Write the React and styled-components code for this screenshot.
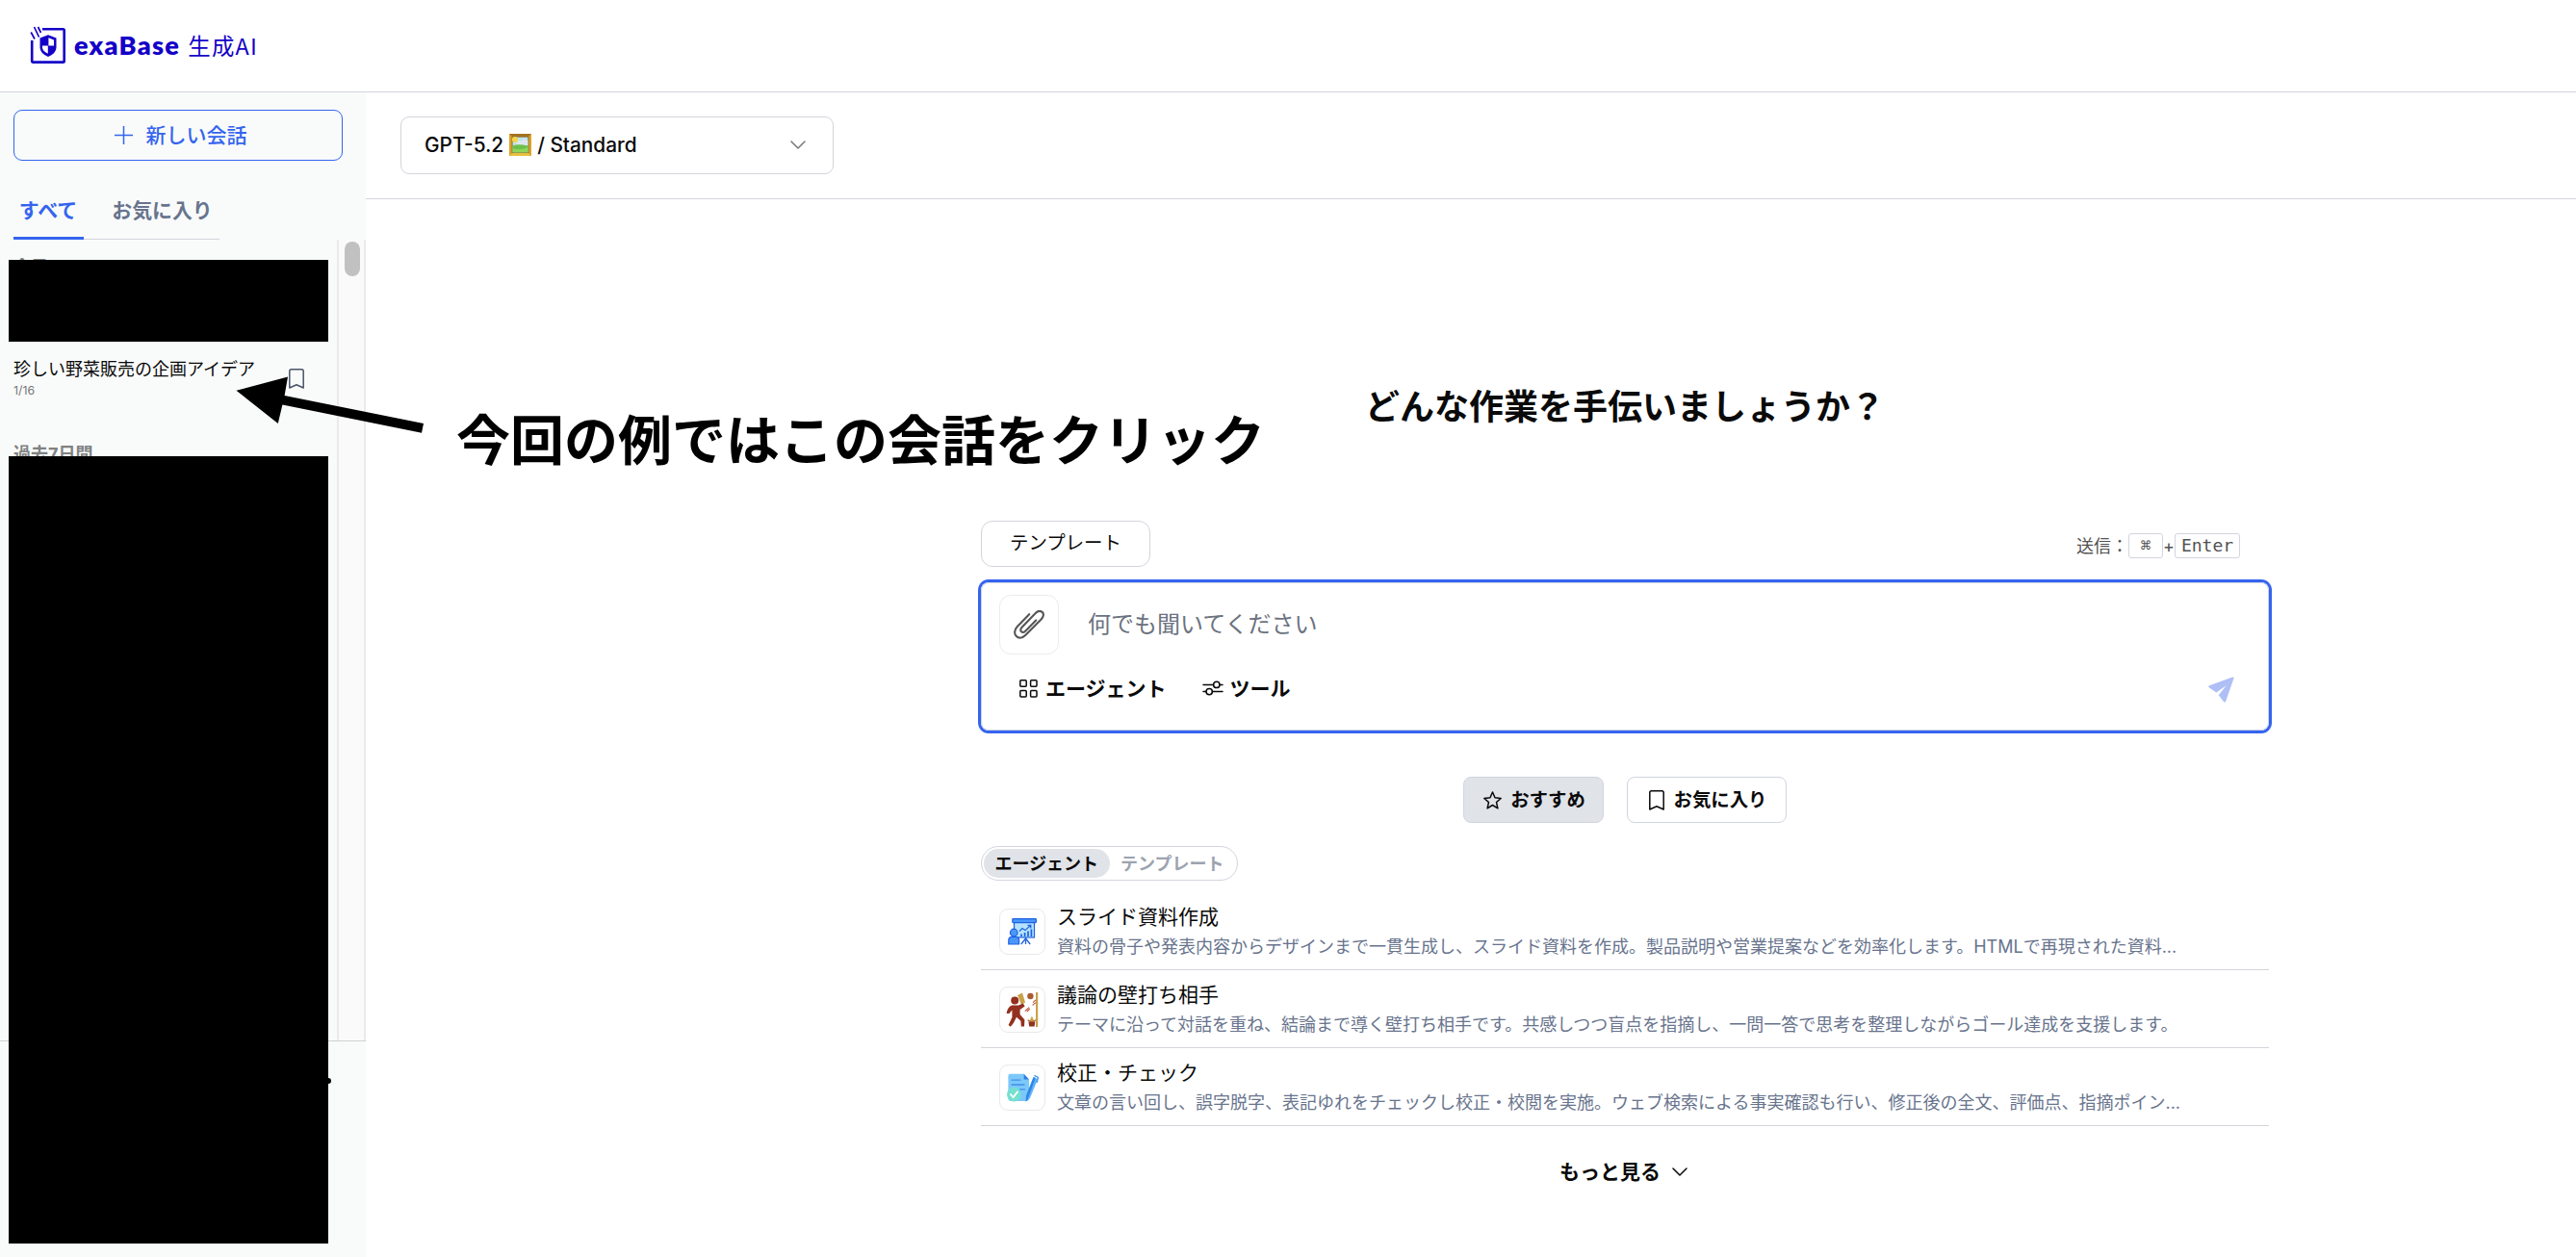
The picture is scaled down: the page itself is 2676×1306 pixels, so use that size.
import React from "react";
import styled, { createGlobalStyle } from "styled-components";

const BLUE = "#3464ef";
const LINE = "#d3d5dc";

const GlobalStyle = createGlobalStyle`
  *, *::before, *::after { box-sizing: border-box; }
  body {
    margin: 0;
    background: #fff;
    color: #0a0a0a;
    font-family: Inter, "Noto Sans CJK JP", sans-serif;
    -webkit-font-smoothing: antialiased;
  }
  button { font: inherit; color: inherit; background: none; border: 0; padding: 0; margin: 0; }
  svg { display: block; flex: none; }
`;

const Page = styled.div`
  position: relative;
  display: flex;
  flex-direction: column;
  width: 2676px;
  height: 1306px;
  overflow: hidden;
`;

const Header = styled.header`
  display: flex;
  align-items: center;
  height: 96px;
  padding: 0 31px 2px;
  border-bottom: 1px solid ${LINE};
`;

const Brand = styled.div`
  display: flex;
  align-items: center;
  color: #1400c8;
  height: 40px;
`;

const BrandName = styled.span`
  margin-left: 8px;
  font: 800 27px/36px Lato, sans-serif;
  letter-spacing: 1.3px;
`;

const BrandSub = styled.span`
  margin-left: 8px;
  font: 400 23.4px/36px "Noto Sans CJK JP", sans-serif;
  letter-spacing: 1.3px;
`;

const Body = styled.div`
  display: flex;
  flex: 1;
  min-height: 0;
`;

const Sidebar = styled.aside`
  display: flex;
  flex-direction: column;
  width: 380px;
  background: #f9fbfa;
`;

const NewChat = styled.button`
  display: flex;
  align-items: center;
  justify-content: center;
  gap: 14px;
  height: 53px;
  margin: 18px 24px 0 14px;
  padding: 0 0 0 5px;
  border: 1px solid ${BLUE};
  border-radius: 9px;
  color: ${BLUE};
  font-size: 21px;
  font-weight: 500;
`;

const NewChatLabel = styled.span`
  padding-bottom: 3px;
`;

const Tabs = styled.div`
  display: flex;
  align-self: flex-start;
  width: 214px;
  height: 49px;
  margin: 33px 0 0 14px;
  box-shadow: inset 0 -1px ${LINE};
`;

const Tab = styled.button`
  width: ${(p) => (p.$active ? 73 : 141)}px;
  padding: ${(p) => (p.$active ? "3px 1px 11px 0" : "0 0 12px 22px")};
  border-bottom: ${(p) => (p.$active ? `3px solid ${BLUE}` : "0")};
  color: ${(p) => (p.$active ? BLUE : "#68748d")};
  font-size: 20.9px;
  font-weight: 600;
  line-height: 30px;
  white-space: nowrap;
`;

const HistoryPane = styled.div`
  display: flex;
  height: 833px;
  border-bottom: 1px solid #cfd1d1;
`;

const HistoryList = styled.div`
  flex: 1;
  padding: 16px 34px 0 14px;
`;

const GroupLabel = styled.div`
  height: 26px;
  color: #808282;
  font-size: 18px;
  font-weight: 700;
  line-height: 26px;
`;

const Conversation = styled.div`
  display: flex;
  align-items: center;
  justify-content: space-between;
  height: 60px;
  margin: 72px 0 36px;
`;

const ConversationTitle = styled.div`
  font-size: 18px;
  line-height: 26px;
  white-space: nowrap;
`;

const ConversationDate = styled.div`
  color: #777;
  font-size: 12.3px;
  line-height: 18px;
`;

const ScrollTrack = styled.div`
  width: 30px;
  padding: 2px 0 0 6px;
  border: solid #e9eaea;
  border-width: 0 2px;
  background: #fafafa;
`;

const ScrollThumb = styled.div`
  width: 16px;
  height: 36px;
  border-radius: 8px;
  background: #c1c1c1;
`;

const Main = styled.main`
  display: flex;
  flex-direction: column;
  flex: 1;
`;

const Toolbar = styled.div`
  display: flex;
  height: 111px;
  padding: 25px 36px;
  border-bottom: 1px solid ${LINE};
`;

const ModelSelect = styled.div`
  display: flex;
  align-items: center;
  justify-content: space-between;
  width: 450px;
  height: 60px;
  padding: 0 28px 1px 24px;
  border: 1px solid ${LINE};
  border-radius: 9px;
`;

const ModelName = styled.div`
  display: flex;
  align-items: center;
  gap: 6px;
  font-size: 20.8px;
  font-weight: 500;
`;

const Column = styled.div`
  display: flex;
  flex-direction: column;
  width: 1338px;
  margin-left: 639px;
  padding-top: 190px;
`;

const Heading = styled.h1`
  margin: 0;
  text-align: center;
  font-size: 36px;
  font-weight: 700;
  line-height: 52px;
`;

const PromptBar = styled.div`
  display: flex;
  align-items: flex-start;
  justify-content: space-between;
  margin-top: 92px;
  padding-right: 30px;
  height: 64px;
`;

const TemplateButton = styled.button`
  width: 176px;
  height: 48px;
  padding-bottom: 5px;
  border: 1px solid ${LINE};
  border-radius: 12px;
  font-size: 19.4px;
  font-weight: 400;
`;

const Shortcut = styled.div`
  display: flex;
  align-items: center;
  height: 26px;
  margin-top: 13px;
  color: #525252;
  font-size: 18px;
`;

const ShortcutLabel = styled.span`
  padding-bottom: 2px;
`;

const Key = styled.kbd`
  display: flex;
  align-items: center;
  justify-content: center;
  width: ${(p) => p.$w}px;
  height: 26px;
  padding-bottom: 1px;
  border: 1px solid #d3d5df;
  border-radius: 3px;
  font: 18px/24px "DejaVu Sans Mono", monospace;
`;

const Plus = styled.span`
  width: 12px;
  text-align: center;
  font-size: 18px;
`;

const PromptBox = styled.div`
  display: flex;
  flex-direction: column;
  height: 154px;
  padding: 12px 18px;
  border: 1px solid #cdd2e4;
  border-radius: 8px;
  box-shadow: 0 0 0 3px ${BLUE};
`;

const PromptLine = styled.div`
  display: flex;
  align-items: center;
  gap: 30px;
`;

const Attach = styled.button`
  display: flex;
  align-items: center;
  justify-content: center;
  width: 62px;
  height: 62px;
  border: 1px solid #ececee;
  border-radius: 12px;
  color: #555;
`;

const Placeholder = styled.span`
  padding-bottom: 6px;
  color: #6b7280;
  font-size: 24px;
`;

const PromptActions = styled.div`
  display: flex;
  align-items: center;
  gap: 37px;
  height: 36px;
  margin-top: 17px;
  padding: 0 18px 0 21px;
`;

const Action = styled.button`
  display: flex;
  align-items: center;
  gap: ${(p) => p.$gap}px;
  font-size: 21px;
  font-weight: 600;
`;

const ActionLabel = styled.span`
  padding-bottom: 3px;
`;

const SendButton = styled.button`
  margin: 2px -1px 0 auto;
  color: #aebff6;
`;

const Filters = styled.div`
  display: flex;
  justify-content: center;
  gap: 24px;
  margin-top: 48px;
`;

const Filter = styled.button`
  display: flex;
  align-items: center;
  justify-content: center;
  gap: ${(p) => p.$gap}px;
  width: ${(p) => p.$w}px;
  height: 48px;
  padding-left: 2px;
  border: 1px solid #d1d5df;
  border-radius: 8px;
  background: ${(p) => (p.$active ? "#e0e3e8" : "#fff")};
  font-size: 19.4px;
  font-weight: 600;
`;

const Segmented = styled.div`
  display: flex;
  align-self: flex-start;
  height: 36px;
  width: 267px;
  margin-top: 24px;
  padding: 2px;
  border: 1px solid #d3d5df;
  border-radius: 18px;
`;

const Segment = styled.button`
  flex: 1;
  padding-bottom: 3px;
  border-radius: 15px;
  background: ${(p) => (p.$active ? "#e0e3e8" : "transparent")};
  color: ${(p) => (p.$active ? "#0a0a0a" : "#9ca3af")};
  font-size: 18px;
  font-weight: 600;
  white-space: nowrap;
`;

const AgentList = styled.div`
  margin-top: 12px;
`;

const AgentRow = styled.div`
  display: flex;
  align-items: center;
  gap: 12px;
  height: 81px;
  padding: 2px 0 0 19px;
  border-bottom: 1px solid ${LINE};
`;

const AgentIcon = styled.div`
  display: flex;
  align-items: center;
  justify-content: center;
  width: 48px;
  height: 48px;
  border: 1px solid #e9e9ec;
  border-radius: 9px;
`;

const AgentTitle = styled.div`
  padding-top: 1px;
  font-size: 21px;
  line-height: 30px;
  font-weight: 400;
`;

const AgentText = styled.div`
  color: #68748d;
  font-size: 18px;
  line-height: 31px;
  white-space: nowrap;
`;

const More = styled.button`
  display: flex;
  align-items: center;
  align-self: center;
  gap: 12px;
  height: 36px;
  margin: 29px 3px 0 0;
  font-size: 21px;
  font-weight: 600;
`;

const Redaction = styled.div`
  position: absolute;
  left: 9px;
  top: ${(p) => p.$top}px;
  width: 332px;
  height: ${(p) => p.$h}px;
  background: #000;
`;

const PeekDot = styled.div`
  position: absolute;
  left: 338px;
  top: 1120px;
  width: 6px;
  height: 6px;
  border-radius: 3px;
  background: #000;
`;

const Arrow = styled.svg`
  position: absolute;
  left: 240px;
  top: 385px;
`;

const Note = styled.div`
  position: absolute;
  left: 474px;
  top: 418px;
  color: #000;
  font-size: 56px;
  font-weight: 700;
  line-height: 80px;
  white-space: nowrap;
`;

const LogoMark = () => (
  <svg width="38" height="40" viewBox="0 0 38 40" fill="none" stroke="currentColor">
    <path d="M13 3.2H34.5Q35.7 3.2 35.7 4.4V36.4Q35.7 37.6 34.5 37.6H3.4Q2.2 37.6 2.2 36.4V15" strokeWidth="2.6" />
    <path d="M1.2 6.5L5 13.5M4.5 1L9.5 11.5M8.5 1L11.5 7" strokeWidth="1.7" />
    <path d="M19 9.2L27.5 12.6V22.4Q27.5 28 19 32Q10.5 28 10.5 22.4V12.6Z" fill="currentColor" stroke="none" />
    <path d="M19.4 12.2L25 14.5V20.6H19.4ZM13 20.6H18.8V28.8Q13 25.6 13 22.4Z" fill="#fff" stroke="none" />
  </svg>
);

const PlusIcon = () => (
  <svg width="19" height="19" viewBox="0 0 19 19" stroke="currentColor" strokeWidth="1.5">
    <path d="M9.5 0V19M0 9.5H19" />
  </svg>
);

const Bookmark = ({ color = "currentColor" }) => (
  <svg width="16" height="21" viewBox="0 0 16 21" fill="none" stroke={color} strokeWidth="1.5" strokeLinejoin="round">
    <path d="M.8 2.6Q.8.8 2.6.8H13.4Q15.2.8 15.2 2.6V20L8 16.8L.8 20Z" />
  </svg>
);

const Chevron = ({ color = "currentColor" }) => (
  <svg width="16" height="9" viewBox="0 0 16 9" fill="none" stroke={color} strokeWidth="1.5" strokeLinecap="round" strokeLinejoin="round">
    <path d="M1 1L8 8L15 1" />
  </svg>
);

const PictureFrame = () => (
  <svg width="23" height="23" viewBox="0 0 23 23">
    <rect width="23" height="23" rx=".6" fill="#d9a42c" />
    <path d="M0 0H23L20 3H3Z" fill="#a5741f" />
    <path d="M0 23H23L20 20H3Z" fill="#e9bf3f" />
    <rect x="2.6" y="2.6" width="17.8" height="17.4" fill="#8f6a25" />
    <rect x="3.6" y="3.6" width="15.8" height="15.6" fill="#bfe3ef" />
    <circle cx="6" cy="6" r="3" fill="#f4d649" />
    <path d="M8 9Q10 5.5 12.5 8Q15 4.5 19.4 7V12H8Z" fill="#dfe6ee" />
    <path d="M3.6 12.5Q9 10 19.4 12.5V19.2H3.6Z" fill="#6cc04a" />
    <path d="M3.6 15Q11 18 19.4 14V19.2H3.6Z" fill="#8fd65a" />
  </svg>
);

const Clip = () => (
  <svg width="32" height="30" viewBox="0 0 32 30" fill="none" stroke="currentColor" strokeWidth="2.1" strokeLinecap="round" strokeLinejoin="round">
    <path d="M16.2 4.2L4 16.8C.4 20.6.2 25 3.2 27.4C6 29.6 9.4 28.8 12.2 26L28.6 9.4C31.4 6.6 31.6 3.6 29.6 1.9C27.6.3 25 .8 22.8 3L8.8 17.6C7 19.4 6.8 21.2 8 22.3C9.2 23.4 11 22.8 12.4 21.4L23.2 10.4" />
  </svg>
);

const GridIcon = () => (
  <svg width="19" height="19" viewBox="0 0 19 19" fill="none" stroke="currentColor" strokeWidth="1.5">
    <rect x=".8" y=".8" width="6.4" height="6.4" rx="1" />
    <rect x="11.6" y=".8" width="6.4" height="6.4" rx="1" />
    <rect x=".8" y="11.6" width="6.4" height="6.4" rx="1" />
    <rect x="11.6" y="11.6" width="6.4" height="6.4" rx="1" />
  </svg>
);

const SlidersIcon = () => (
  <svg width="22" height="16" viewBox="0 0 22 16" fill="none" stroke="currentColor" strokeWidth="1.5" strokeLinecap="round">
    <circle cx="14.8" cy="4.4" r="3.2" />
    <circle cx="7.2" cy="11.6" r="3.2" />
    <path d="M1 4.4H11.6M18 4.4H21M1 11.6H4M10.4 11.6H21" />
  </svg>
);

const SendIcon = () => (
  <svg width="27" height="27" viewBox="0 0 27 27" fill="currentColor">
    <path d="M25.2.4Q27 .2 26.4 2L18.2 25.4Q17.2 27.6 15.8 25.8L10.8 19.2L18.6 9.2L8.4 16.4L1 11.4Q-.6 10 1.2 9.2Z" />
  </svg>
);

const StarIcon = () => (
  <svg width="19" height="19" viewBox="0 0 19 19" fill="none" stroke="currentColor" strokeWidth="1.5" strokeLinejoin="round">
    <path d="M9.5 1L12 6.8L18.2 7.4L13.5 11.5L14.9 17.8L9.5 14.5L4.1 17.8L5.5 11.5L.8 7.4L7 6.8Z" />
  </svg>
);

const SlideIcon = () => (
  <svg width="30" height="30" viewBox="0 0 30 30">
    <rect x="6.5" y="4" width="21" height="17" fill="#b5e2ff" stroke="#1e62e0" strokeWidth="1.2" />
    <rect x="4.8" y="1.6" width="24.6" height="4" rx=".8" fill="#4a97fb" stroke="#1e62e0" strokeWidth="1.2" />
    <path d="M12 14.5L15 11.6L18 13.6L23.5 8.5M20.5 8.3H23.8V11.6" fill="none" stroke="#1e62e0" strokeWidth="1.2" />
    <path d="M14 20V17.4M17.6 20V16M21 20V14.4M24.4 20V12.6" stroke="#1e62e0" strokeWidth="1.7" />
    <path d="M18.5 21V28M18.5 22L13.8 28M18.5 22L23.2 28" stroke="#1e62e0" strokeWidth="1.3" />
    <circle cx="6.2" cy="16" r="3.8" fill="#4a97fb" stroke="#1e62e0" strokeWidth="1.2" />
    <path d="M.8 28V24Q.8 20.4 4.4 20.4H8Q11.6 20.4 11.6 24V28Z" fill="#4a97fb" stroke="#1e62e0" strokeWidth="1.2" />
  </svg>
);

const WallHitIcon = () => (
  <svg width="34" height="38" viewBox="0 0 34 38">
    <rect x="31" y="1" width="2.2" height="36" fill="#c9a24a" />
    <circle cx="9.2" cy="9.4" r="4" fill="#93301f" />
    <path d="M12 4L17 1.6L20 11.5L16 14Z" fill="#c9a24a" />
    <path d="M6 14.5H13L17.8 12.6L19.6 15.4L14.6 19V24L19.4 29.6L19 36.4H15.8L15.4 30.8L11 26.8L7.8 33L4.8 36.8L2.6 35L6.4 27V19.4L3.4 23H.6Q1.4 16.6 6 14.5Z" fill="#93301f" />
    <circle cx="25.4" cy="5" r="3.2" fill="#a85c33" />
    <path d="M28 11.6L31 8.8M27.6 14.4L31 11.6M19.8 20.6L24 16.6M21.8 21L24.8 18" stroke="#c2523d" strokeWidth="1.1" />
    <path d="M23.4 31.4H30.4L29.6 36.6H24.2Z" fill="#93301f" />
    <path d="M26.9 25.5L29.6 31.4H24.2Z" fill="#c9a24a" />
    <path d="M22.6 29.6Q26.8 33.6 31 29.6" fill="none" stroke="#a85c33" strokeWidth="1.2" />
  </svg>
);

const ProofIcon = () => (
  <svg width="34" height="30" viewBox="0 0 34 30">
    <path d="M4.4 .8H18.6L24 6.4V26Q24 29 21 29H5Q2.4 29 2.4 26V2.8Q2.4.8 4.4.8Z" fill="#7cc8fa" />
    <path d="M18.6.8L24 6.4H18.6Z" fill="#2f7de0" />
    <path d="M6 7.2H15M6 12H19M14.6 16.8H19.6" stroke="#3f8fe8" strokeWidth="1.3" strokeLinecap="round" />
    <path d="M28.6 4L33 6.2L25 26L20.6 29.4L21 23.4Z" fill="#62b6f8" />
    <path d="M28.6 4L30.8 5.1L22.4 27.8L20.6 29.4L21 23.4Z" fill="#2f86e6" />
    <path d="M29.4 2.4L33.4 4.4L32 10" fill="none" stroke="#3f9af0" strokeWidth="1.4" />
    <circle cx="8.4" cy="22" r="7.4" fill="#74e0d0" />
    <path d="M4.8 22L7.6 25L12 19.4" fill="none" stroke="#fff" strokeWidth="1.8" strokeLinecap="round" />
  </svg>
);

const AGENTS = [
  {
    icon: <SlideIcon />,
    title: "スライド資料作成",
    text: "資料の骨子や発表内容からデザインまで一貫生成し、スライド資料を作成。製品説明や営業提案などを効率化します。HTMLで再現された資料...",
  },
  {
    icon: <WallHitIcon />,
    title: "議論の壁打ち相手",
    text: "テーマに沿って対話を重ね、結論まで導く壁打ち相手です。共感しつつ盲点を指摘し、一問一答で思考を整理しながらゴール達成を支援します。",
  },
  {
    icon: <ProofIcon />,
    title: "校正・チェック",
    text: "文章の言い回し、誤字脱字、表記ゆれをチェックし校正・校閲を実施。ウェブ検索による事実確認も行い、修正後の全文、評価点、指摘ポイン...",
  },
];

export default function App() {
  return (
    <Page lang="ja">
      <GlobalStyle />
      <Header>
        <Brand>
          <LogoMark />
          <BrandName>exaBase</BrandName>
          <BrandSub>生成AI</BrandSub>
        </Brand>
      </Header>
      <Body>
        <Sidebar>
          <NewChat><PlusIcon /><NewChatLabel>新しい会話</NewChatLabel></NewChat>
          <Tabs>
            <Tab $active>すべて</Tab>
            <Tab>お気に入り</Tab>
          </Tabs>
          <HistoryPane>
            <HistoryList>
              <GroupLabel>今日</GroupLabel>
              <Conversation>
                <div>
                  <ConversationTitle>珍しい野菜販売の企画アイデア</ConversationTitle>
                  <ConversationDate>1/16</ConversationDate>
                </div>
                <Bookmark color="#4a5468" />
              </Conversation>
              <GroupLabel>過去7日間</GroupLabel>
            </HistoryList>
            <ScrollTrack><ScrollThumb /></ScrollTrack>
          </HistoryPane>
        </Sidebar>
        <Main>
          <Toolbar>
            <ModelSelect>
              <ModelName>GPT-5.2 <PictureFrame /> / Standard</ModelName>
              <Chevron color="#777" />
            </ModelSelect>
          </Toolbar>
          <Column>
            <Heading>どんな作業を手伝いましょうか？</Heading>
            <PromptBar>
              <TemplateButton>テンプレート</TemplateButton>
              <Shortcut>
                <ShortcutLabel>送信：</ShortcutLabel><Key $w={36}>⌘</Key><Plus>+</Plus><Key $w={68}>Enter</Key>
              </Shortcut>
            </PromptBar>
            <PromptBox>
              <PromptLine>
                <Attach><Clip /></Attach>
                <Placeholder>何でも聞いてください</Placeholder>
              </PromptLine>
              <PromptActions>
                <Action $gap={8}><GridIcon /><ActionLabel>エージェント</ActionLabel></Action>
                <Action $gap={7}><SlidersIcon /><ActionLabel>ツール</ActionLabel></Action>
                <SendButton><SendIcon /></SendButton>
              </PromptActions>
            </PromptBox>
            <Filters>
              <Filter $active $w={146} $gap={9}><StarIcon /><ActionLabel>おすすめ</ActionLabel></Filter>
              <Filter $w={166} $gap={10}><Bookmark /><ActionLabel>お気に入り</ActionLabel></Filter>
            </Filters>
            <Segmented>
              <Segment $active>エージェント</Segment>
              <Segment>テンプレート</Segment>
            </Segmented>
            <AgentList>
              {AGENTS.map((a) => (
                <AgentRow key={a.title}>
                  <AgentIcon>{a.icon}</AgentIcon>
                  <div>
                    <AgentTitle>{a.title}</AgentTitle>
                    <AgentText>{a.text}</AgentText>
                  </div>
                </AgentRow>
              ))}
            </AgentList>
            <More><ActionLabel>もっと見る</ActionLabel><Chevron /></More>
          </Column>
        </Main>
      </Body>
      <PeekDot />
      <Redaction $top={270} $h={85} />
      <Redaction $top={474} $h={818} />
      <Arrow width="204" height="70" viewBox="240 385 204 70">
        <path d="M245.5 405.7L299 391.5L295.6 411L440 440L438 449.8L293.4 420.5L288.8 440Z" />
      </Arrow>
      <Note>今回の例ではこの会話をクリック</Note>
    </Page>
  );
}
